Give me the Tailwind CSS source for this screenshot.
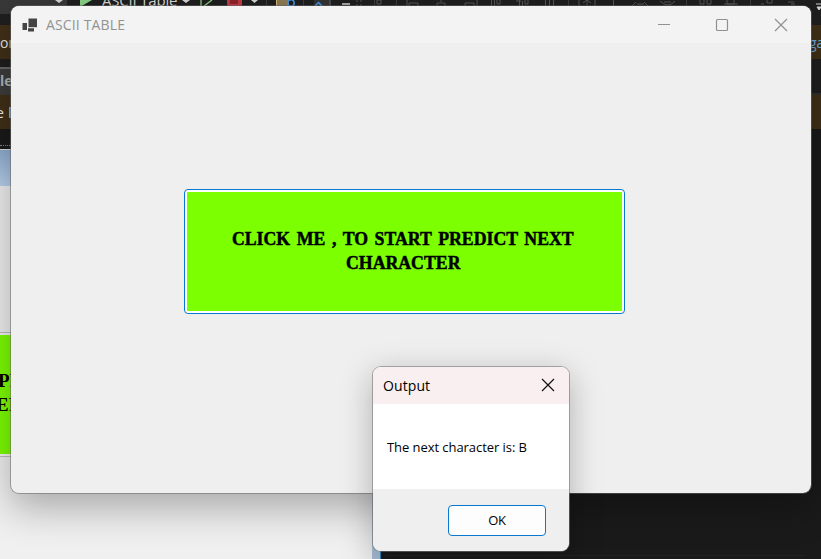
<!DOCTYPE html>
<html lang="en">
<head>
<meta charset="utf-8">
<title>ASCII TABLE</title>
<script src="https://cdn.jsdelivr.net/npm/@tailwindcss/browser@4"></script>
</head>
<body class="relative h-[559px] w-[821px] overflow-hidden bg-[#1a1a1a] font-['Open_Sans','Noto_Sans',sans-serif]">

<!-- IDE behind the windows -->
<div class="flex h-[559px] flex-col">
  <div class="relative h-[25px] shrink-0 overflow-hidden bg-[#1f1f1f]">
    <div class="h-[14px] w-[67px] bg-[#383838]"></div>
    <svg class="absolute left-0 top-0" width="821" height="8" viewBox="0 0 821 8" fill="none">
      <path d="M55 0h8l-4 3zM182 0h8l-4 3zM251 0h7l-3.500 3z" fill="#d6d6d6"/>
      <path d="M80 0h12L80 7z" fill="#89d185"/>
      <path d="M201 0v7M204 6L212 0" stroke="#89d185" stroke-width="1.300"/>
      <path d="M227 0h15v4l-1 3h-13l-1-3z" fill="#c53a46"/><path d="M230 0h8v4h-8z" fill="#8f222c"/>
      <path d="M276 0h13v6h-13z" fill="#8f7b55"/><path d="M276.500 0v6" stroke="#dcb67a"/>
      <circle cx="291" cy="3" r="3.200" stroke="#4296e8" stroke-width="1.500"/>
      <path d="M314 0h15v6h-15z" fill="#333"/><path d="M330 0v6" stroke="#777"/><path d="M315 6l3.500-3.500L322 6" stroke="#4296e8" stroke-width="1.500"/>
      <path d="M342 4h8" stroke="#d6d6d6" stroke-width="1.500"/>
      <path d="M266.500 0v6M303.500 0v6M374.500 0v6M396.500 0v6M568.500 0v6M686.500 0v6M750.500 0v6" stroke="#3c3c3c"/>
      <path d="M356 1h2m2 0h2m-6 4h2m2 0h2M377 0h4v4h-4zM407 0v6M409 6V3h9v3M441 0v2M437 6V3h8v3M477 0v6M465 6V3h9v3M491.500 0v6M494.500 0v6M497 0v4h3V0M516 1h5M519.500 0v6M522.500 1v5M525 0v4h3V0M545.500 0v6M549.500 0v6M553.500 0v6M579 0v6M595 0v6M583 3l4-3 4 3M587 0v5M613.500 0v6M632 6l4-4M648 6l-4-4M637 4h7M660 1q8 8 15 0M664 2h7M700 0v4h4V0M707 0v4h4V0M724 4h14M727 0v4h7V0M761 4h3M767 0v3h5V0M788 2h6M791 4h4" stroke="#575757"/>
    </svg>
    <div class="absolute left-[102px] top-[-10px] whitespace-nowrap text-[15px] leading-[20px] text-[#d6d6d6] tracking-[-0.2px]">ASCII Table</div>
    <svg class="absolute left-[815px] top-0" width="6" height="14" viewBox="0 0 6 14"><path d="M1 4h5M2 7h4l-2 3z" stroke="#d6d6d6" fill="#d6d6d6"/></svg>
  </div>
  <div class="flex h-[34px] shrink-0 justify-between bg-[#413018] text-[14px] leading-[35px]">
    <span class="text-[#e8e8e8]">on</span>
    <span class="w-[12px] text-[#6cb0e8]">ga</span>
  </div>
  <div class="h-[8px] shrink-0 bg-[#1f1f1f]"></div>
  <div class="flex h-[28px] shrink-0">
    <div class="w-[420px] border-t-2 border-[#686868] bg-[#3d3d3d] text-[14px] font-bold leading-[24px] text-[#b4b4b4]">les</div>
    <div class="grow border-b-2 border-[#303030] bg-[#1f1f1f]"></div>
  </div>
  <div class="flex h-[34px] shrink-0 bg-[#413018] text-[14px] leading-[35px] text-[#f0f0f0]"><span class="-ml-1 w-[12px]">e</span><span class="ml-[1px] mt-[12px] h-[11px] w-[3px] bg-[#78aee0]"></span></div>
  <div class="h-[20px] shrink-0 bg-[#1a1a1a] pt-[16px]"><div class="w-[380px] border-t border-dotted border-[#888]"></div></div>
  <div class="flex grow">
    <!-- form designer surface -->
    <div class="flex w-[381px] border-r border-[#2d7fb0] bg-[#a6bcd6]">
      <div class="flex w-[372px] flex-col bg-[#f0f0f0]">
        <div class="h-[37px] border-t border-[#ddd] bg-linear-to-b from-[#8fadd0] to-[#bad2ee]"></div>
        <div class="h-[146px]"></div>
        <div class="flex h-[125px] w-[200px] flex-col border-y border-[#bdbdbd] bg-[#f4f4f4] py-[2px]">
          <div class="grow overflow-hidden bg-[#7cff00] pt-[34px] font-['Liberation_Serif',serif] text-[19px] font-bold leading-[24px] text-black">
            <div class="-ml-[2px] whitespace-nowrap">PREDICT</div>
            <div class="-ml-[4px] whitespace-nowrap">ER</div>
          </div>
        </div>
      </div>
    </div>
    <div class="grow bg-[#1a1a1a]"><div class="ml-[3px] mt-[406px] w-[420px] border-t border-[#222]"></div></div>
  </div>
</div>

<!-- main window -->
<section class="absolute left-[10px] top-[5px] flex h-[489px] w-[802px] flex-col rounded-[9px] border border-[#6668] bg-[#efefef] bg-clip-padding shadow-[0_14px_38px_rgba(0,0,0,0.3)]">
  <header class="flex h-[37px] shrink-0 items-center rounded-t-[8px] bg-[#f3f3f3]">
    <svg class="ml-[11px] shrink-0" width="16" height="16" viewBox="0 0 16 16"><path d="M6.500 1.500H15v8.700H6.500z" fill="#444"/><path d="M.500 6H5v7H.500zM6 11.200h6v3.300H6z" fill="#444"/></svg>
    <h1 class="ml-[8px] grow whitespace-nowrap text-[14px] leading-[20px] tracking-[0.15px] text-[#929292]">ASCII TABLE</h1>
    <svg class="shrink-0" width="170" height="36" viewBox="0 0 170 36" fill="none" stroke="#909090"><path d="M17 17.500h12"/><rect x="75.500" y="12.500" width="11" height="11" rx="1" stroke-width="1.200"/><path d="M134 12l12 12M146 12l-12 12" stroke-width="1.200"/></svg>
  </header>
  <main class="flex grow flex-col pl-[173px] pt-[146px]">
    <button class="h-[125px] w-[441px] rounded-[4px] border border-[#0878d0] bg-white p-[2px]">
      <span class="flex h-full flex-col items-center justify-center bg-[#7cff00] pb-[2px] pr-[3px] font-['Liberation_Serif',serif] text-[19px] font-bold leading-[24px] text-black">
        <span class="scale-x-[0.935] whitespace-nowrap [word-spacing:2.3px] [-webkit-text-stroke:0.5px_black]">CLICK ME , TO START PREDICT NEXT</span>
        <span class="scale-x-[0.935] whitespace-nowrap [-webkit-text-stroke:0.5px_black]">CHARACTER</span>
      </span>
    </button>
  </main>
</section>

<!-- message box -->
<section class="absolute left-[372px] top-[366px] flex h-[186px] w-[198px] flex-col rounded-[9px] border border-[#7779] bg-white bg-clip-padding shadow-[0_8px_32px_rgba(0,0,0,0.26)]">
  <header class="flex h-[37px] shrink-0 items-center justify-between rounded-t-[8px] bg-[#f9eff0] pl-[10px] pr-[14px]">
    <h2 class="text-[14px] leading-[20px] tracking-[0.1px] text-black">Output</h2>
    <svg class="-mt-[2px]" width="14" height="14" viewBox="0 0 14 14" stroke="#111" stroke-width="1.200"><path d="M1 1l12 12M13 1L1 13"/></svg>
  </header>
  <p class="flex grow items-center whitespace-nowrap pl-[14px] pt-[2px] text-[13px] tracking-[-0.06px] text-black">The next character is: B</p>
  <footer class="flex h-[62px] shrink-0 justify-end rounded-b-[8px] bg-[#efefef] pr-[23px] pt-[16px]">
    <button class="h-[31px] w-[98px] rounded-[4px] border border-[#0878d0] bg-[#fdfdfd] pt-[1px] text-[13px] tracking-[-0.2px] text-black">OK</button>
  </footer>
</section>
</body>
</html>
